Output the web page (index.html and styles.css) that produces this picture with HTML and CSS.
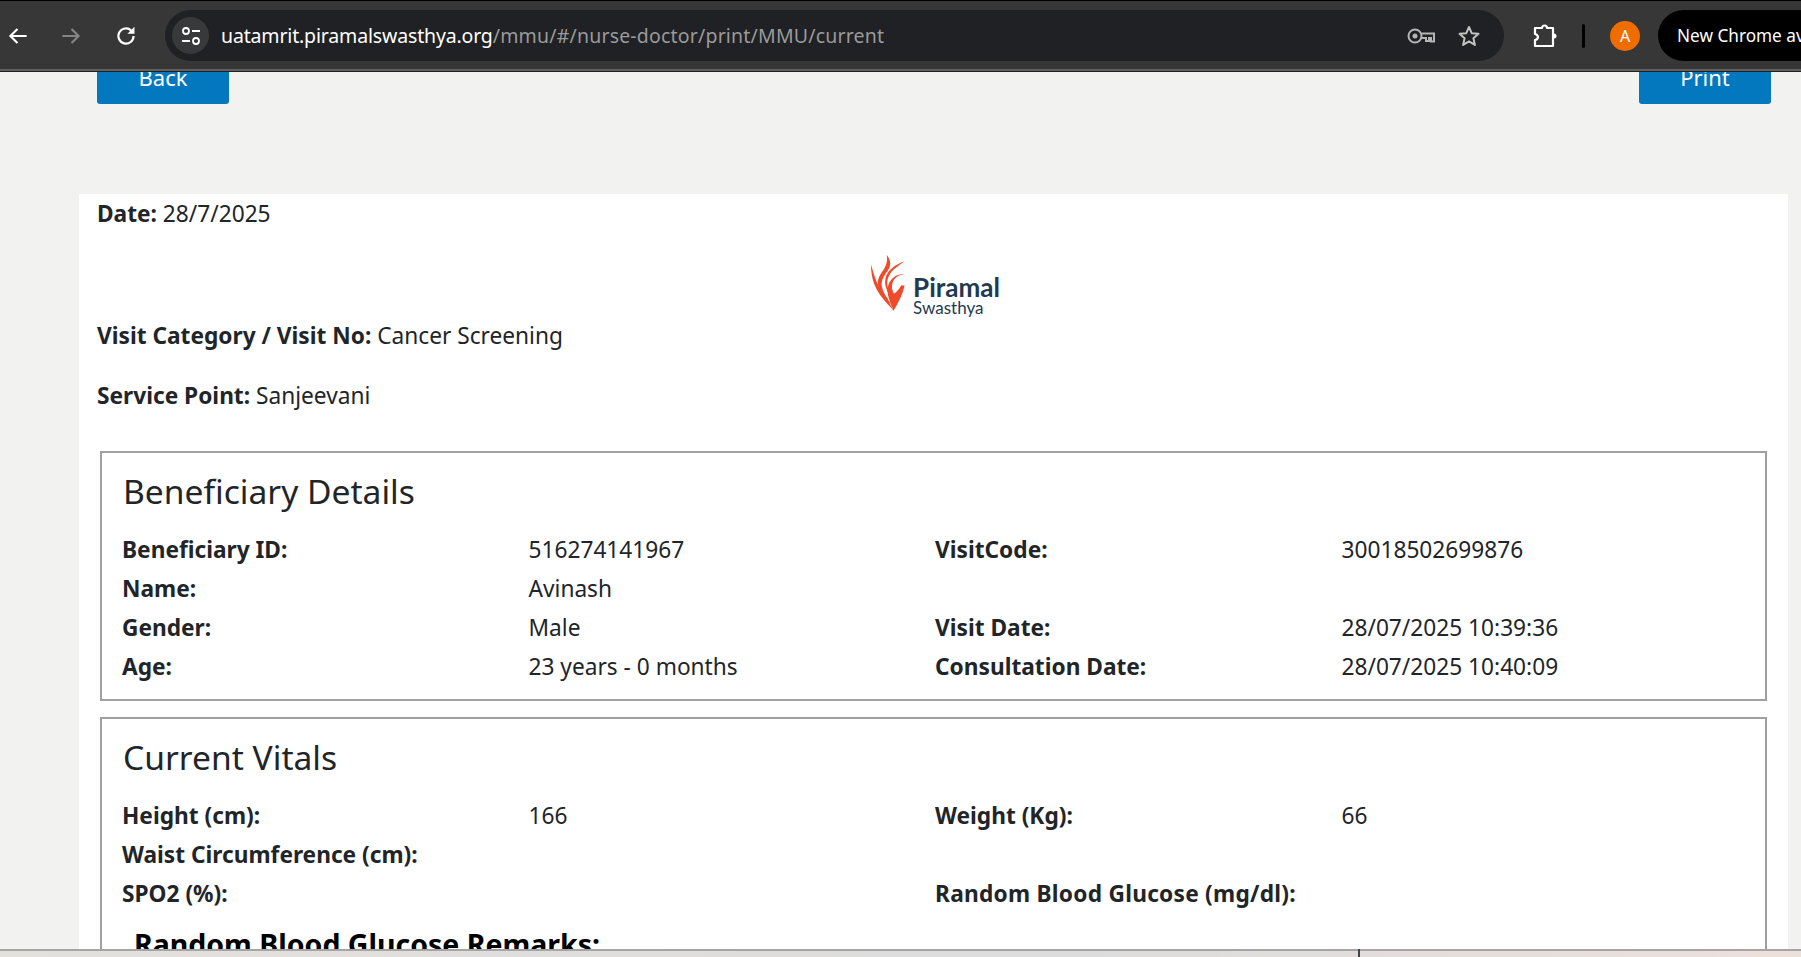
FILE: index.html
```html
<!DOCTYPE html>
<html lang="en">
<head>
  <meta charset="UTF-8" />
  <title>Print - MMU</title>
  <link rel="stylesheet" href="styles.css">
</head>
<body>
  <!-- browser toolbar -->
  <div class="toolbar">
    <svg class="tool-icon" viewBox="0 0 24 24"><path d="M20 12H5M11.500 5.500 5 12l6.500 6.500" fill="none" stroke="#fff" stroke-width="2"/></svg>
    <svg class="tool-icon forward" viewBox="0 0 24 24"><path d="M4 12h15M12.500 5.500 19 12l-6.500 6.500" fill="none" stroke="#858585" stroke-width="2"/></svg>
    <svg class="tool-icon reload" viewBox="0 0 24 24"><path d="M19 12a7 7 0 1 1-2.200-5.100L19 9" fill="none" stroke="#fff" stroke-width="2"/><path d="M19.800 3.500v6.500h-6.500z" fill="#fff"/></svg>

    <div class="omnibox">
      <span class="site-chip">
        <svg width="22" height="22" viewBox="0 0 22 22"><circle cx="6" cy="6" r="3" fill="none" stroke="#fff" stroke-width="1.800"/><path d="M12 6h8M2 16h8" stroke="#fff" stroke-width="1.800"/><circle cx="16" cy="16" r="3" fill="none" stroke="#fff" stroke-width="1.800"/></svg>
      </span>
      <span class="url"><span class="url-host">uatamrit.piramalswasthya.org</span>/mmu/#/nurse-doctor/print/MMU/current</span>
      <svg class="key" width="28" height="18" viewBox="0 0 28 18"><circle cx="8" cy="9" r="6.500" fill="none" stroke="#b5b5b5" stroke-width="2"/><circle cx="8" cy="9" r="2.500" fill="#b5b5b5"/><path d="M14.500 6.500H27v8h-3v-3.500h-2v3h-3v-3h-4.500" fill="none" stroke="#b5b5b5" stroke-width="2"/></svg>
      <svg class="star" width="24" height="24" viewBox="0 0 24 24"><path d="m12 3 2.700 6.200 6.800.6-5.100 4.500 1.500 6.600L12 17.400l-5.900 3.500 1.500-6.600-5.100-4.500 6.800-.6z" fill="none" stroke="#c2c2c2" stroke-width="2" stroke-linejoin="round"/></svg>
    </div>

    <svg class="puzzle" width="26" height="26" viewBox="0 0 26 26"><path d="M3 5h7a2.500 2.500 0 0 1 5 0h6v18H3v-6a3.500 3.500 0 0 0 3-3 3.500 3.500 0 0 0-3-3z" fill="none" stroke="#fff" stroke-width="2.200" stroke-linejoin="round"/><path d="M22 10.500a2.500 2.500 0 0 1 0 5z" fill="#fff"/></svg>
    <span class="divider"></span>
    <span class="avatar">A</span>
    <span class="update-pill">New Chrome available</span>
  </div>

  <div class="viewport">
    <div class="actions">
      <button class="btn">Back</button>
      <button class="btn">Print</button>
    </div>

    <div class="sheet">
      <p class="date"><strong>Date:</strong> 28/7/2025</p>

      <div class="logo">
        <svg class="logo-mark" width="35" height="57" viewBox="0 0 105 172">
          <path d="M3 32C8 50 18 88 34 112c12 18 26 36 36 58C48 146 24 122 12 90 6 72 2 52 3 32z" fill="#ee4b2b"/>
          <path d="M50 2c14 18 14 34 2 50C40 68 32 82 36 100c4 18 18 36 30 56C48 138 28 116 24 94c-3-18 6-32 16-46C48 36 54 20 50 2z" fill="#ee4b2b"/>
          <path d="M104 22C88 34 66 46 56 68c-8 18-4 36 6 54l10 18C56 124 42 100 46 76c4-26 30-44 58-54z" fill="#ee4b2b"/>
          <path d="M104 62C90 60 74 70 68 86c-4 12-2 24 4 34 8-6 16-14 22-26l10 2c-6 26-18 52-34 76-4-14-12-30-16-48-6-26 6-48 24-58 8-4 18-6 26-4z" fill="#ee4b2b"/>
        </svg>
        <div class="logo-text">
          <span class="logo-name">Piramal</span>
          <span class="logo-sub">Swasthya</span>
        </div>
      </div>

      <p class="meta"><strong>Visit Category / Visit No:</strong> Cancer Screening</p>
      <p class="meta"><strong>Service Point:</strong> Sanjeevani</p>

      <section class="panel">
        <h2>Beneficiary Details</h2>
        <div class="rows">
          <b>Beneficiary ID:</b><span>516274141967</span><b>VisitCode:</b><span>30018502699876</span>
          <b>Name:</b><span>Avinash</span><b></b><span></span>
          <b>Gender:</b><span>Male</span><b>Visit Date:</b><span>28/07/2025 10:39:36</span>
          <b>Age:</b><span>23 years - 0 months</span><b>Consultation Date:</b><span>28/07/2025 10:40:09</span>
        </div>
      </section>

      <section class="panel">
        <h2>Current Vitals</h2>
        <div class="rows">
          <b>Height (cm):</b><span>166</span><b>Weight (Kg):</b><span>66</span>
          <b>Waist Circumference (cm):</b><span></span><b></b><span></span>
          <b>SPO2 (%):</b><span></span><b class="wide">Random Blood Glucose (mg/dl):</b><span></span>
        </div>
        <h3>Random Blood Glucose Remarks:</h3>
      </section>
    </div>
  </div>

  <div class="taskbar"><span class="task-sep"></span></div>
</body>
</html>
```

FILE: styles.css
```css
:root {
  --toolbar: #373737;
  --omni: #202124;
  --page: #f2f2f0;
  --text: #212529;
  --blue: #0378bf;
  --line: #a0a0a0;
}

* {
  box-sizing: border-box;
}

body {
  margin: 0;
  height: 957px;
  overflow: hidden;
  display: flex;
  flex-direction: column;
  background-color: var(--page);
  color: var(--text);
  font-family: 'Noto Sans', 'Open Sans', sans-serif;
  font-size: 22.700px;
}

/* toolbar */
.toolbar {
  flex: none;
  height: 72px;
  display: flex;
  align-items: center;
  background-color: var(--toolbar);
  border-top: 1px solid #000;
  border-bottom: 1px solid #222;
  box-shadow: inset 0 -2px #606060;
  overflow: hidden;
  padding-left: 5px;
  padding-bottom: 1px;
}

.tool-icon {
  width: 26px;
  height: 26px;
  flex: none;
}

.forward {
  margin-left: 27px;
}

.reload {
  margin-left: 29px;
}

.omnibox {
  flex: none;
  width: 1339px;
  height: 51px;
  margin-left: 26px;
  display: flex;
  align-items: center;
  background-color: var(--omni);
  border-radius: 26px;
  padding-left: 7px;
}

.site-chip {
  width: 37px;
  height: 37px;
  display: flex;
  align-items: center;
  justify-content: center;
  border-radius: 50%;
  background-color: #38393b;
  flex: none;
}

.url {
  margin-left: 12px;
  flex: 1;
  color: #9a9a9a;
  font-size: 19.500px;
  letter-spacing: 0.19px;
  white-space: nowrap;
}

.url-host {
  color: #fff;
  letter-spacing: -0.16px;
}

.key {
  flex: none;
}

.star {
  flex: none;
  margin-left: 22px;
  margin-right: 23px;
}

.puzzle {
  flex: none;
  margin-left: 28px;
}

.divider {
  flex: none;
  width: 3px;
  height: 24px;
  margin-left: 24px;
  background-color: #000;
  border-radius: 2px;
}

.avatar {
  flex: none;
  width: 30px;
  height: 30px;
  margin-left: 25px;
  border-radius: 50%;
  background-color: #ef6c00;
  color: #fff;
  font-size: 16px;
  display: flex;
  align-items: center;
  justify-content: center;
}

.update-pill {
  flex: none;
  height: 51px;
  width: 260px;
  margin-left: 18px;
  padding-left: 19px;
  display: flex;
  align-items: center;
  background-color: #000;
  color: #fff;
  border-radius: 26px;
  font-size: 17.200px;
  white-space: nowrap;
}

/* page */
.viewport {
  flex: 1;
  overflow: hidden;
  min-height: 0;
}

.actions {
  display: flex;
  justify-content: space-between;
  padding: 0 30px 0 97px;
  margin-top: -23px;
}

.btn {
  height: 55px;
  min-width: 132px;
  border: none;
  border-radius: 3px;
  background-color: var(--blue);
  color: #fff;
  font: inherit;
  font-size: 22px;
  padding: 0 40px;
}

.sheet {
  margin: 90px 13px 0 79px;
  background-color: #fff;
  padding: 0 18px;
  height: 900px;
}

.date {
  margin: 0;
  padding-top: 2px;
  line-height: 36px;
}

.logo {
  display: flex;
  align-items: flex-start;
  justify-content: center;
  gap: 8px;
  margin-top: 21px;
  height: 65px;
  padding-left: 3px;
}

.logo-mark {
  margin-top: 1px;
}

.logo-text {
  display: flex;
  flex-direction: column;
  margin-top: 22px;
  font-family: Lato, sans-serif;
  color: #1f3a52;
}

.logo-name {
  font-size: 26px;
  font-weight: 700;
  line-height: 25px;
}

.logo-sub {
  font-size: 17px;
  line-height: 15px;
}

.meta {
  margin: 0 0 24px;
  line-height: 36px;
}

.meta:last-of-type {
  margin-bottom: 37px;
}

.panel {
  margin: 16px 3px;
  border: 2px solid var(--line);
  padding: 13px 21px 0 20px;
}

.panel h2 {
  margin: 0 0 14px 1px;
  font-size: 33.600px;
  font-weight: 400;
  line-height: 50px;
}

.rows {
  display: grid;
  grid-template-columns: repeat(4, 406.500px);
  grid-auto-rows: 39px;
  line-height: 39px;
  margin-bottom: 13px;
  white-space: nowrap;
}

.wide {
  letter-spacing: 0.25px;
}

.panel h3 {
  margin: 0 0 40px 12px;
  color: #000;
  font-size: 28.500px;
  font-weight: 700;
  line-height: 36px;
}

.taskbar {
  flex: none;
  height: 8px;
  position: relative;
  border-top: 2px solid #a5a5a5;
  background: linear-gradient(90deg, #e4e0dc, #dcdcdc 60%, #ece0da);
}

.task-sep {
  position: absolute;
  left: 1358px;
  top: -2px;
  width: 2px;
  height: 8px;
  background-color: #444;
}
```
